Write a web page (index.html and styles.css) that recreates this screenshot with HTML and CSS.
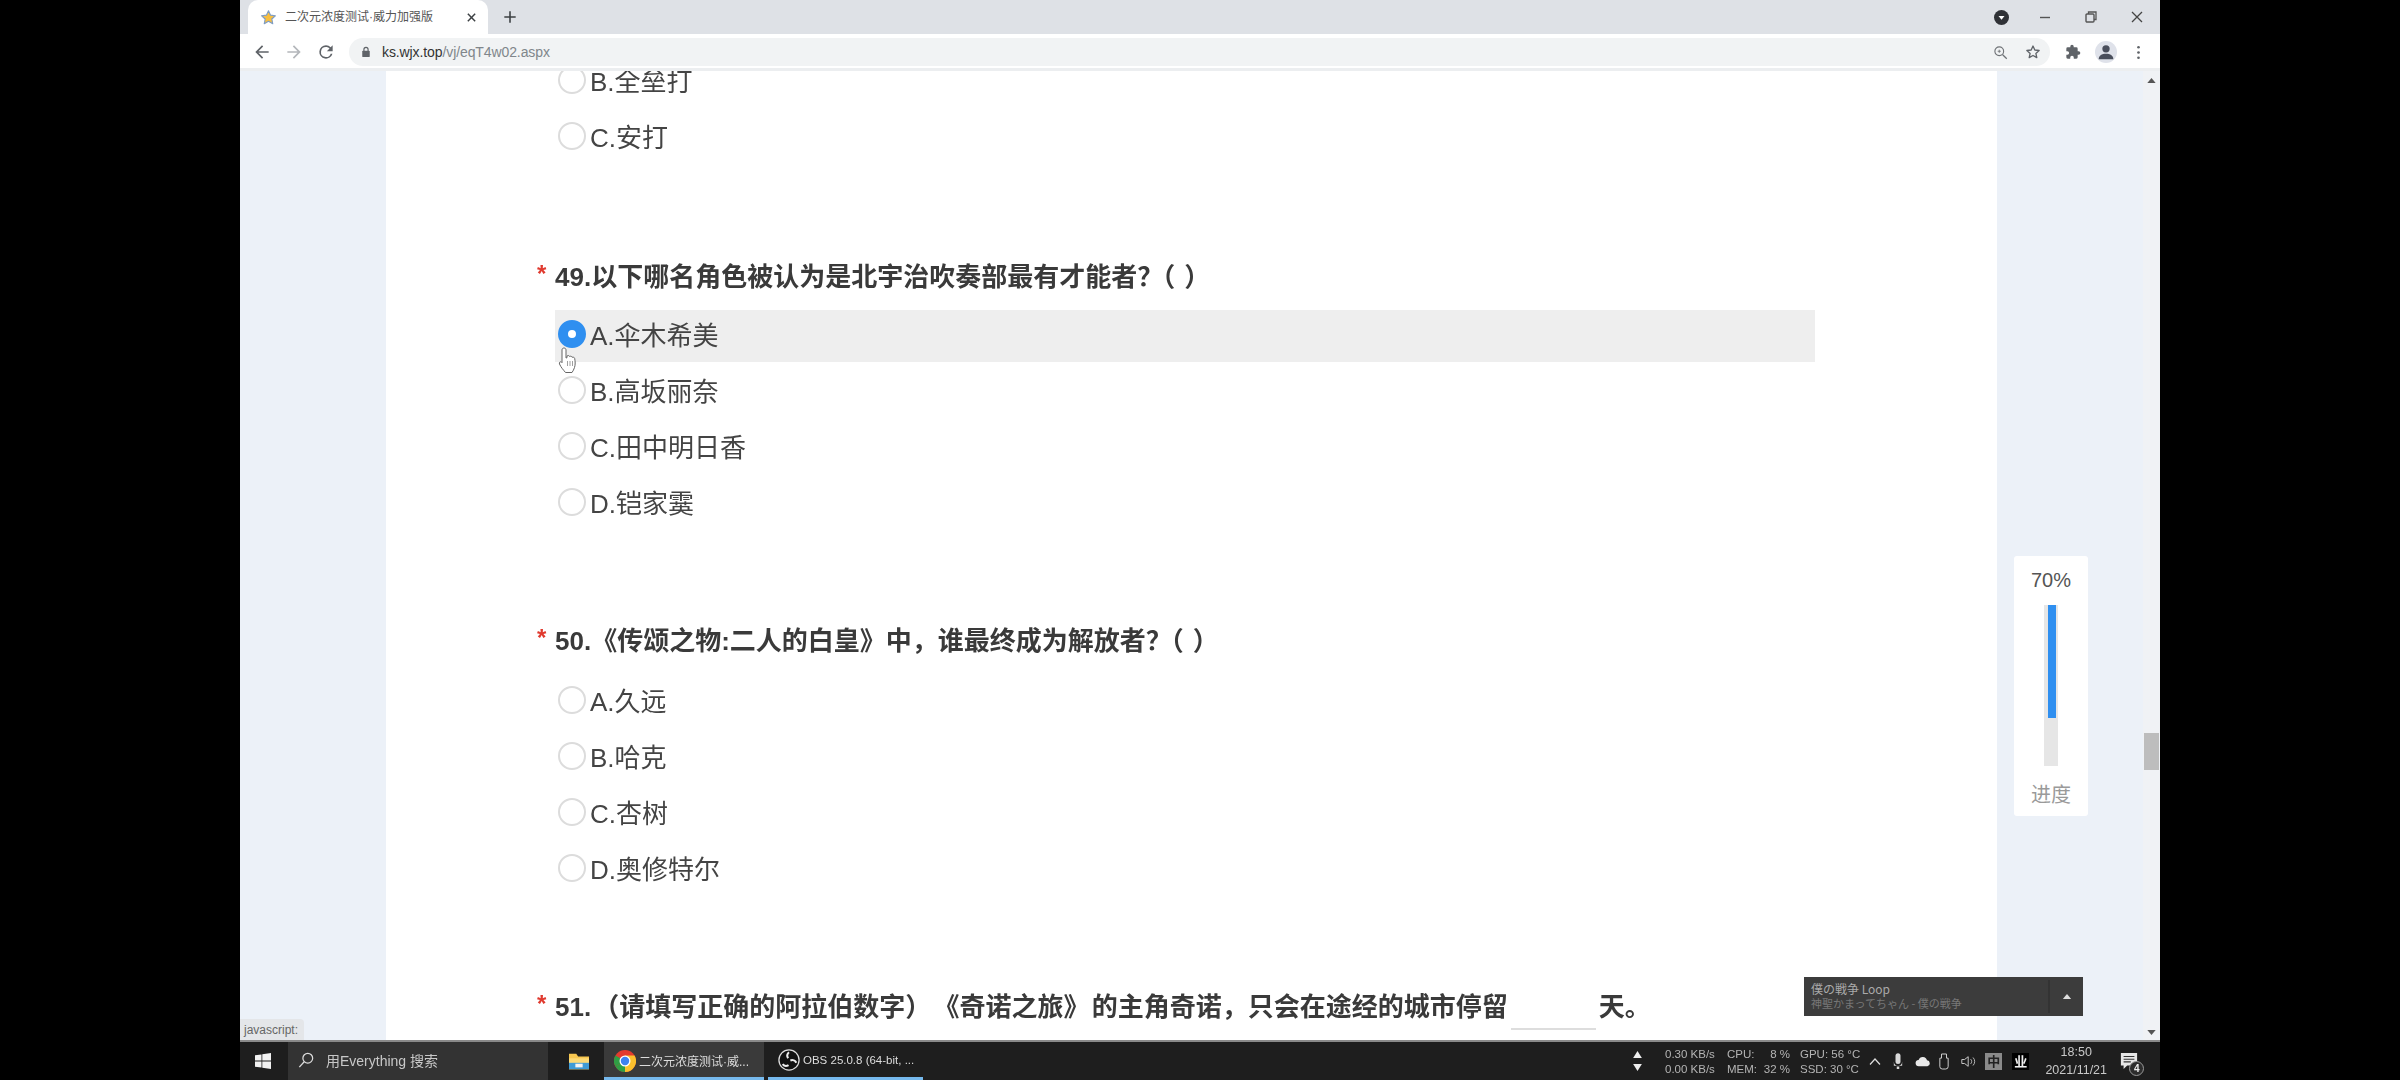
FILE: index.html
```html
<!DOCTYPE html>
<html lang="zh-CN">
<head>
<meta charset="utf-8">
<title>二次元浓度测试·威力加强版</title>
<link rel="stylesheet" href="styles.css">
</head>
<body>
<div class="window">
  <header class="tabstrip">
    <div class="tab">
      <svg class="favicon" viewBox="0 0 24 24"><path d="M12 2.500l2.900 6.200 6.800.8-5 4.600 1.300 6.700-6-3.400-6 3.400 1.300-6.700-5-4.600 6.800-.8z" fill="#f9bf3f" stroke="#7d9cc4" stroke-width="1.600" stroke-linejoin="round"/></svg>
      <span class="tab-title">二次元浓度测试·威力加强版</span>
      <svg class="tab-close" viewBox="0 0 12 12"><path d="M2 2l8 8M10 2l-8 8" stroke="#3c4043" stroke-width="1.600" fill="none"/></svg>
    </div>
    <svg class="new-tab" viewBox="0 0 16 16"><path d="M8 1.500v13M1.500 8h13" stroke="#3c4043" stroke-width="1.800" fill="none"/></svg>
    <div class="win-controls">
      <svg class="rec" viewBox="0 0 16 16"><circle cx="8" cy="8" r="8" fill="#2f3136"/><path d="M4.800 6.400h6.400L8 10.400z" fill="#fff"/></svg>
      <svg class="win-btn" viewBox="0 0 14 14"><path d="M2 7.500h10" stroke="#555" stroke-width="1.400"/></svg>
      <svg class="win-btn" viewBox="0 0 14 14"><path d="M4.500 4V2h7.500v7.500h-2" fill="none" stroke="#555" stroke-width="1.300"/><rect x="2" y="4" width="8" height="8" rx="1" fill="none" stroke="#555" stroke-width="1.400"/></svg>
      <svg class="win-btn" viewBox="0 0 14 14"><path d="M2 2l10 10M12 2L2 12" stroke="#444" stroke-width="1.300"/></svg>
    </div>
  </header>

  <nav class="toolbar">
    <svg class="nav-ic" viewBox="0 0 24 24"><path d="M20 11H7.800l5.600-5.600L12 4l-8 8 8 8 1.400-1.400L7.800 13H20z" fill="#5f6368"/></svg>
    <svg class="nav-ic" viewBox="0 0 24 24"><path d="M20 11H7.800l5.600-5.600L12 4l-8 8 8 8 1.400-1.400L7.800 13H20z" fill="#b4b7bb" transform="matrix(-1 0 0 1 24 0)"/></svg>
    <svg class="nav-ic" viewBox="0 0 24 24"><path d="M17.650 6.350A7.960 7.960 0 0 0 12 4a8 8 0 1 0 7.730 10h-2.080A6 6 0 1 1 12 6c1.660 0 3.140.69 4.220 1.780L13 11h7V4z" fill="#5f6368"/></svg>
    <div class="omnibox">
      <svg class="lock" viewBox="0 0 12 14"><path d="M3.500 6V4a2.500 2.500 0 0 1 5 0v2" fill="none" stroke="#5f6368" stroke-width="1.400"/><rect x="1.500" y="5.500" width="9" height="7.500" rx="1" fill="#5f6368"/></svg>
      <span class="url"><span class="url-host">ks.wjx.top</span>/vj/eqT4w02.aspx</span>
      <svg class="omni-ic" viewBox="0 0 24 24"><circle cx="10" cy="10" r="7" fill="none" stroke="#6f7276" stroke-width="1.800"/><path d="M15.500 15.500L22 22" stroke="#6f7276" stroke-width="2"/><path d="M10 7.500v5M7.500 10h5" stroke="#6f7276" stroke-width="1.400"/></svg>
      <svg class="omni-ic star" viewBox="0 0 24 24"><path d="M12 3l2.700 6 6.500.7-4.900 4.400 1.400 6.400-5.700-3.300-5.700 3.300 1.400-6.400L2.800 9.700 9.300 9z" fill="none" stroke="#5f6368" stroke-width="2" stroke-linejoin="round"/></svg>
    </div>
    <svg class="puzzle" viewBox="0 0 24 24"><path d="M20.500 11H19V7a2 2 0 0 0-2-2h-4V3.500a2.500 2.500 0 0 0-5 0V5H4a2 2 0 0 0-2 2v3.800h1.500a2.700 2.700 0 0 1 0 5.400H2V20a2 2 0 0 0 2 2h3.800v-1.500a2.700 2.700 0 0 1 5.400 0V22H17a2 2 0 0 0 2-2v-4h1.500a2.500 2.500 0 0 0 0-5z" fill="#5f6368"/></svg>
    <span class="avatar"><svg viewBox="0 0 24 24"><circle cx="12" cy="8.500" r="4" fill="#4a4f5c"/><path d="M4 20c0-4 3.500-6 8-6s8 2 8 6z" fill="#4a4f5c"/></svg></span>
    <svg class="dots" viewBox="0 0 6 20"><circle cx="3" cy="3" r="1.800" fill="#5f6368"/><circle cx="3" cy="10" r="1.800" fill="#5f6368"/><circle cx="3" cy="17" r="1.800" fill="#5f6368"/></svg>
  </nav>

  <div class="viewport">
    <main class="paper">
      <div class="questions">
        <section class="question">
          <div class="options">
            <div class="option"><i class="radio"></i><span>B.全垒打</span></div>
            <div class="option"><i class="radio"></i><span>C.安打</span></div>
          </div>
        </section>
        <section class="question">
          <h2 class="q-title"><span class="req">*</span><span>49.以下哪名角色被认为是北宇治吹奏部最有才能者<span class="qm">？</span><span class="po">（</span>）</span></h2>
          <div class="options">
            <div class="option option-hover"><i class="radio radio-on"></i><span>A.伞木希美</span></div>
            <div class="option"><i class="radio"></i><span>B.高坂丽奈</span></div>
            <div class="option"><i class="radio"></i><span>C.田中明日香</span></div>
            <div class="option"><i class="radio"></i><span>D.铠家霙</span></div>
          </div>
        </section>
        <section class="question question-tall">
          <h2 class="q-title"><span class="req">*</span><span>50.《传颂之物:二人的白皇》中，谁最终成为解放者<span class="qm">？</span><span class="po">（</span>）</span></h2>
          <div class="options">
            <div class="option"><i class="radio"></i><span>A.久远</span></div>
            <div class="option"><i class="radio"></i><span>B.哈克</span></div>
            <div class="option"><i class="radio"></i><span>C.杏树</span></div>
            <div class="option"><i class="radio"></i><span>D.奥修特尔</span></div>
          </div>
        </section>
        <section class="question">
          <h2 class="q-title"><span class="req">*</span><span class="q-spaced">51. （请填写正确的阿拉伯数字） 《奇诺之旅》 的主角奇诺，只会在途经的城市停留</span><span class="blank"></span><span>天。</span></h2>
        </section>
      </div>
    </main>
    <aside class="scrollbar">
      <svg class="sb-arrow" viewBox="0 0 10 6"><path d="M5 0l5 6H0z" fill="#555"/></svg>
      <span class="sb-thumb"></span>
      <svg class="sb-arrow" viewBox="0 0 10 6"><path d="M5 6L0 0h10z" fill="#555"/></svg>
    </aside>

    <div class="progress">
      <span class="progress-pct">70%</span>
      <div class="progress-track"><div class="progress-fill"></div></div>
      <span class="progress-label">进度</span>
    </div>

    <div class="music">
      <div class="music-text">
        <span class="music-title">僕の戦争 Loop</span>
        <span class="music-sub">神聖かまってちゃん - 僕の戦争</span>
      </div>
      <div class="music-toggle"><svg viewBox="0 0 10 6"><path d="M5 0l5 6H0z" fill="#ddd"/></svg></div>
    </div>

    <div class="status">javascript:</div>

    <svg class="cursor" viewBox="0 0 21 28"><path d="M6 2c1.300 0 2 1 2 2v8l1-.3V10c1-.8 2.300-.5 2.600.5 1-.6 2.300-.2 2.500.8 1-.4 2.400 0 2.600 1.200.5 3 .8 6-.2 9-.6 2-1.500 3.500-2.500 5H7.500C5.500 24 3 21.500 1.500 18c-.6-1.500.6-2.700 2-2l.5.6V4c0-1.200.8-2 2-2z" fill="#fff" stroke="#666" stroke-width="1"/><path d="M9.500 15v5M12 15v5M14.500 15v5" stroke="#888" stroke-width=".8"/></svg>
  </div>

  <footer class="taskbar">
    <svg class="start" viewBox="0 0 16 16"><path d="M0 2.300l6.500-.9v6.200H0zM7.300 1.300L16 0v7.600H7.300zM0 8.400h6.500v6.200L0 13.700zM7.300 8.400H16V16l-8.700-1.300z" fill="#f2f2f2"/></svg>
    <div class="search">
      <svg class="search-ic" viewBox="0 0 18 18"><circle cx="11" cy="7" r="5.500" fill="none" stroke="#ddd" stroke-width="1.400"/><path d="M7 11l-5.500 6" stroke="#ddd" stroke-width="1.500"/></svg>
      <span>用Everything 搜索</span>
    </div>
    <svg class="folder" viewBox="0 0 24 22"><path d="M1 3h8l2 3h12v14H1z" fill="#f6c64f"/><path d="M1 8h22v12H1z" fill="#fbd976"/><rect x="1" y="13" width="22" height="7" fill="#3f9bd6"/><rect x="8" y="14" width="8" height="4" fill="#f4f4f4"/></svg>
    <div class="task task-active">
      <svg class="task-ic" viewBox="0 0 24 24"><circle cx="12" cy="12" r="12" fill="#e33b2e"/><path d="M12 12L1.600 18a12 12 0 0 0 10.400 6z" fill="#2f9e44"/><path d="M1.600 6a12 12 0 0 0 0 12L12 12z" fill="#2f9e44"/><path d="M12 24a12 12 0 0 0 10.400-18H12z" fill="#fbc02d"/><circle cx="12" cy="12" r="6" fill="#fff"/><circle cx="12" cy="12" r="4.600" fill="#3d82f0"/></svg>
      <span>二次元浓度测试·威...</span>
    </div>
    <div class="task task-obs">
      <svg class="task-ic" viewBox="0 0 24 24"><circle cx="12" cy="12" r="11" fill="#111" stroke="#ddd" stroke-width="1.400"/><path d="M12 3.500a5 5 0 0 0-1 6.500M20 15a5 5 0 0 0-6.500-2.500M5 16.500a5 5 0 0 0 6.500 1" fill="none" stroke="#eee" stroke-width="2.200"/></svg>
      <span>OBS 25.0.8 (64-bit, ...</span>
    </div>
    <div class="tray">
      <div class="net-arrows">
        <svg viewBox="0 0 10 8"><path d="M5 0l5 8H0z" fill="#eee"/></svg>
        <svg viewBox="0 0 10 8"><path d="M5 8L0 0h10z" fill="#eee"/></svg>
      </div>
      <div class="stats">
        <span>0.30 KB/s</span><span class="st-k">CPU:</span><span class="st-v">8 %</span><span>GPU: 56 °C</span>
        <span>0.00 KB/s</span><span class="st-k">MEM:</span><span class="st-v">32 %</span><span>SSD: 30 °C</span>
      </div>
      <div class="tray-icons">
        <svg class="t-chev" viewBox="0 0 12 7"><path d="M1 6.500L6 1l5 5.500" fill="none" stroke="#ddd" stroke-width="1.200"/></svg>
        <svg class="t-ic" viewBox="0 0 12 20"><rect x="3" y="0" width="6" height="13" rx="3" fill="#d8d8d8"/><path d="M1 10c0 7 10 7 10 0v5H1zM4.500 16h3v3h-3z" fill="#d8d8d8"/></svg>
        <svg class="t-ic t-wide" viewBox="0 0 20 12"><path d="M5 12a4 4 0 0 1-.5-8A5.500 5.500 0 0 1 15 4.500 3.800 3.800 0 0 1 15.500 12z" fill="#e8e8e8"/></svg>
        <svg class="t-ic" viewBox="0 0 12 20"><path d="M3 1h6v5h2v10a3 3 0 0 1-3 3H4a3 3 0 0 1-3-3V6h2z" fill="none" stroke="#ccc" stroke-width="1.200"/></svg>
        <svg class="t-ic t-wide" viewBox="0 0 20 16"><path d="M1 5.500h3.500L9 2v12l-4.500-3.500H1z" fill="none" stroke="#ccc" stroke-width="1.200"/><path d="M12 5a4 4 0 0 1 0 6M15 3a7 7 0 0 1 0 10" fill="none" stroke="#bbb" stroke-width="1.200"/></svg>
        <span class="ime ime-zh">中</span>
        <span class="ime ime-dark">业</span>
      </div>
      <div class="clock"><span>18:50</span><span>2021/11/21</span></div>
      <div class="notify">
        <svg viewBox="0 0 20 20"><path d="M1 1h18v14H8l-4 4v-4H1z" fill="#e6e6e6"/><path d="M4 5h12M4 8h12M4 11h8" stroke="#333" stroke-width="1.200"/></svg>
        <span class="badge">4</span>
      </div>
    </div>
  </footer>
</div>
</body>
</html>
```

FILE: styles.css
```css
* { box-sizing: border-box; }

html, body {
  margin: 0;
  height: 100%;
  background: #000;
  overflow: hidden;
}

.window {
  width: 1920px;
  height: 1080px;
  margin: 0 auto;
  display: flex;
  flex-direction: column;
  overflow: hidden;
  font-family: "Liberation Sans", "Noto Sans CJK SC", sans-serif;
  color: #333;
  filter: blur(0.5px);
}

/* tab strip */
.tabstrip {
  flex: 0 0 34px;
  display: flex;
  align-items: center;
  padding-left: 8px;
  background: #dee1e6;
}

.tab {
  width: 240px;
  height: 34px;
  display: flex;
  align-items: center;
  padding: 0 11px 0 12px;
  background: #fff;
  border-radius: 10px 10px 0 0;
}

.favicon { width: 17px; height: 17px; flex: none; }

.tab-title {
  margin: 0 0 3px 8px;
  font-size: 12px;
  color: #555;
  white-space: nowrap;
  flex: 1;
}

.tab-close { width: 11px; height: 11px; flex: none; }

.new-tab { width: 14px; height: 14px; margin-left: 15px; }

.win-controls {
  margin-left: auto;
  display: flex;
  align-items: center;
  padding-right: 16px;
}

.rec { width: 15px; height: 15px; margin-right: 29px; }
.win-btn { width: 14px; height: 14px; margin-left: 32px; }
.rec + .win-btn { margin-left: 0; }

/* toolbar */
.toolbar {
  flex: 0 0 37px;
  display: flex;
  align-items: center;
  padding: 2px 0 0 12px;
  background: #fff;
  border-bottom: 3px solid #eceef0;
}

.nav-ic { width: 20px; height: 20px; margin-right: 12px; flex: none; }
.nav-ic:nth-of-type(3) { margin-right: 13px; }

.omnibox {
  width: 1701px;
  height: 28px;
  display: flex;
  align-items: center;
  padding: 0 9px 0 12px;
  background: #f1f3f4;
  border-radius: 14px;
}

.lock { width: 10px; height: 12px; flex: none; }

.url {
  margin-left: 11px;
  font-size: 14px;
  letter-spacing: -0.1px;
  line-height: 18px;
  white-space: nowrap;
  color: #80868b;
  flex: 1;
}

.url-host { color: #333; }

.omni-ic { width: 15px; height: 15px; flex: none; margin-right: 17px; }
.omni-ic.star { margin-right: 0; width: 16px; height: 16px; }

.puzzle { width: 16px; height: 16px; margin-left: 15px; flex: none; }

.avatar {
  width: 22px;
  height: 22px;
  margin-left: 14px;
  border-radius: 50%;
  background: #dfe2ea;
  flex: none;
}

.avatar svg { display: block; width: 100%; height: 100%; }

.dots { width: 5px; height: 15px; margin-left: 19px; flex: none; }

/* page */
.viewport {
  position: relative;
  flex: 1;
  min-height: 0;
  display: flex;
  background: #ecf1f8;
  overflow: hidden;
}

.paper {
  width: 1611px;
  margin-left: 146px;
  padding: 0 182px 0 150px;
  background: #fff;
  overflow: hidden;
}

.questions {
  margin-top: -15px;
  display: flex;
  flex-direction: column;
  gap: 91px;
}

.question:first-child { margin-bottom: 2px; }

.q-title {
  margin: 0 0 13px;
  height: 40px;
  padding-bottom: 6px;
  display: flex;
  align-items: center;
  font-size: 26px;
  font-weight: 700;
  color: #3a3a3a;
  white-space: pre;
}

.question-tall .q-title { margin-bottom: 15px; }

.q-spaced { word-spacing: -5px; }

.qm { letter-spacing: -14px; }
.po { letter-spacing: 9px; }

.req {
  width: 19px;
  flex: none;
  padding-left: 1px;
  font-size: 24px;
  color: #e03a2f;
}

.blank {
  width: 85px;
  height: 43px;
  margin: 0 3px;
  border-bottom: 2px solid #ddd;
  align-self: flex-start;
}

.options {
  display: flex;
  flex-direction: column;
  gap: 4px;
  margin-left: 19px;
}

.option {
  height: 52px;
  display: flex;
  align-items: center;
  gap: 4px;
  padding-left: 3px;
  font-size: 26px;
  color: #444;
}

.option span { margin-bottom: 6px; }

.option-hover { background: #eeeeee; }

.radio {
  width: 28px;
  height: 28px;
  margin-top: -4px;
  flex: none;
  border: 2px solid #dcdcdc;
  border-radius: 50%;
  background: #fff;
}

.radio-on {
  border: 10px solid #2f8ff0;
  background: #fff;
}

/* scrollbar */
.scrollbar {
  width: 17px;
  margin-left: auto;
  display: flex;
  flex-direction: column;
  align-items: center;
  background: #f0f2f5;
  position: relative;
}

.sb-arrow { width: 9px; height: 5px; margin: 7px 0; flex: none; }
.sb-arrow:last-child { margin: auto 0 5px; }

.sb-thumb {
  position: absolute;
  top: 662px;
  left: 1px;
  width: 15px;
  height: 37px;
  background: #bdbdbd;
}

/* floating progress */
.progress {
  position: absolute;
  left: 1774px;
  top: 485px;
  width: 74px;
  height: 260px;
  display: flex;
  flex-direction: column;
  align-items: center;
  background: #fff;
  border-radius: 3px;
}

.progress-pct {
  margin-top: 12px;
  height: 24px;
  line-height: 24px;
  font-size: 20px;
  color: #555;
}

.progress-track {
  width: 14px;
  height: 161px;
  margin-top: 13px;
  background: #e6e6e6;
}

.progress-fill {
  width: 8px;
  height: 113px;
  margin-left: 4px;
  background: #2f8ff0;
}

.progress-label {
  margin-top: 16px;
  font-size: 20px;
  line-height: 26px;
  color: #9a9a9a;
}

/* music popup */
.music {
  position: absolute;
  left: 1564px;
  top: 906px;
  width: 279px;
  height: 39px;
  display: flex;
  background: #3c3c3c;
  font-family: "Noto Sans CJK JP", sans-serif;
}

.music-text {
  width: 246px;
  display: flex;
  flex-direction: column;
  justify-content: center;
  padding: 0 0 2px 7px;
  border-right: 2px solid #333;
  margin: 3px 0;
}

.music-title { font-size: 12px; line-height: 15px; color: #aaa; }
.music-sub { font-size: 11px; line-height: 14px; color: #777; }

.music-toggle {
  flex: 1;
  display: flex;
  align-items: center;
  justify-content: center;
}

.music-toggle svg { width: 10px; height: 5px; }

/* status bubble */
.status {
  position: absolute;
  left: 0;
  bottom: 0;
  height: 21px;
  padding: 0 6px 0 4px;
  line-height: 22px;
  font-size: 12px;
  color: #666;
  background: #e4e6e9;
  border-radius: 0 4px 0 0;
}

.cursor {
  position: absolute;
  left: 318px;
  top: 275px;
  width: 21px;
  height: 28px;
}

/* taskbar */
.taskbar {
  flex: 0 0 40px;
  display: flex;
  align-items: stretch;
  background: #1e1e1e;
  border-top: 2px solid #8a8a8a;
  color: #d4d4d4;
}

.start { width: 16px; height: 16px; margin: 11px 15px 0; flex: none; }

.search {
  width: 260px;
  margin-left: 2px;
  display: flex;
  align-items: center;
  padding: 0 0 2px 10px;
  gap: 12px;
  background: #333;
  font-size: 14px;
  color: #c8c8c8;
}

.search-ic { width: 16px; height: 16px; flex: none; }

.folder { width: 22px; height: 20px; margin: 9px 14px 0 20px; flex: none; }

.task {
  width: 160px;
  display: flex;
  align-items: center;
  gap: 3px;
  padding-left: 10px;
  font-size: 12px;
  color: #ddd;
  white-space: nowrap;
  border-bottom: 3px solid #76b9ed;
}

.task-active { background: #3a3a3a; margin-right: 4px; padding-top: 2px; }
.task-obs { width: 155px; font-size: 11.5px; }

.task-ic { width: 22px; height: 22px; flex: none; }

.tray {
  margin-left: auto;
  width: 528px;
  display: flex;
  align-items: center;
  font-size: 11.5px;
  color: #b4b4b4;
  white-space: nowrap;
}

.net-arrows {
  display: flex;
  flex-direction: column;
  gap: 6px;
  margin-left: 1px;
}

.net-arrows svg { display: block; width: 9px; height: 7px; }

.stats {
  display: grid;
  grid-template-columns: 62px 36px 27px auto;
  row-gap: 1px;
  line-height: 14px;
  margin-left: 23px;
}

.st-v { text-align: right; }
.stats span:nth-child(4n) { margin-left: 10px; }

.tray-icons {
  display: flex;
  align-items: center;
  margin-left: 9px;
}

.t-chev { width: 12px; height: 7px; margin-right: 12px; }
.t-ic { width: 10px; height: 19px; margin-right: 12px; }
.t-wide { width: 16px; height: 13px; margin-right: 8px; }

.ime {
  width: 17px;
  height: 17px;
  font-size: 13px;
  line-height: 17px;
  text-align: center;
  color: #eee;
  font-weight: 700;
}

.ime-zh { background: #8a8a8a; color: #222; margin-right: 10px; }
.ime-dark { background: #000; }

.clock {
  display: flex;
  flex-direction: column;
  align-items: center;
  width: 70px;
  margin-left: 12px;
  font-size: 12.5px;
  line-height: 18px;
  color: #c8c8c8;
}

.notify {
  position: relative;
  width: 18px;
  height: 18px;
  margin-left: 9px;
}

.notify svg { display: block; width: 100%; height: 100%; }

.badge {
  position: absolute;
  right: -6px;
  bottom: -6px;
  width: 15px;
  height: 15px;
  border-radius: 50%;
  background: #2d2d2d;
  border: 1px solid #999;
  font-size: 10px;
  line-height: 13px;
  font-weight: 700;
  text-align: center;
  color: #eee;
}
```
